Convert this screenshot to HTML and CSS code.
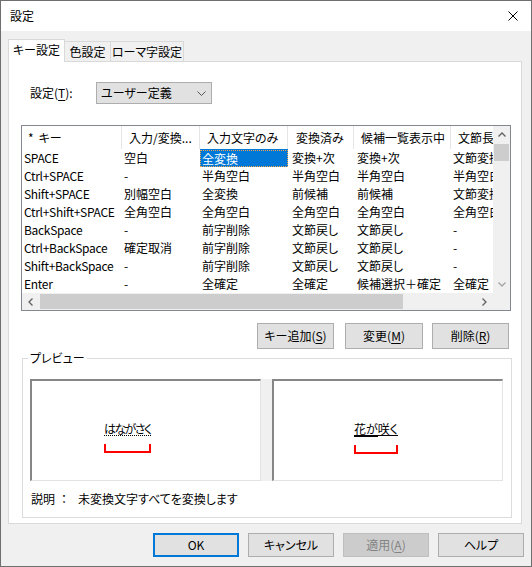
FILE: index.html
```html
<!DOCTYPE html>
<html lang="ja">
<head>
<meta charset="utf-8">
<title>設定</title>
<link rel="stylesheet" href="styles.css">
</head>
<body>
<div class="window">
  <div class="titlebar">
    <span class="title">設定</span>
    <svg class="close" width="10" height="10" viewBox="0 0 10 10"><path d="M0.5 0.5L9.5 9.5M9.5 0.5L0.5 9.5" stroke="#000" stroke-width="1" fill="none"/></svg>
  </div>
  <div class="tabs">
    <div class="tab active">キー設定</div>
    <div class="tab t2">色設定</div>
    <div class="tab t3">ローマ字設定</div>
  </div>
  <div class="panel">
    <div class="setting-row">
      <span class="setting-label">設定(<u>T</u>):</span>
      <div class="dropdown">
        <span>ユーザー定義</span>
        <svg width="9" height="5" viewBox="0 0 9 5"><path d="M0.5 0.5L4.5 4.5L8.5 0.5" stroke="#555" stroke-width="1" fill="none"/></svg>
      </div>
    </div>
    <div class="list">
      <div class="grid-area">
        <div class="row head">
          <div class="cell c1"><span class="star">*</span>キー</div>
          <div class="cell c2">入力/変換...</div>
          <div class="cell c3">入力文字のみ</div>
          <div class="cell c4">変換済み</div>
          <div class="cell c5">候補一覧表示中</div>
          <div class="cell c6">文節長変更中</div>
        </div>
        <div class="row">
          <div class="cell c1">SPACE</div><div class="cell c2">空白</div><div class="cell c3 selected"><span class="focus">全変換</span></div><div class="cell c4">変換+次</div><div class="cell c5">変換+次</div><div class="cell c6">文節変換</div>
        </div>
        <div class="row">
          <div class="cell c1">Ctrl+SPACE</div><div class="cell c2">-</div><div class="cell c3">半角空白</div><div class="cell c4">半角空白</div><div class="cell c5">半角空白</div><div class="cell c6">半角空白</div>
        </div>
        <div class="row">
          <div class="cell c1">Shift+SPACE</div><div class="cell c2">別幅空白</div><div class="cell c3">全変換</div><div class="cell c4">前候補</div><div class="cell c5">前候補</div><div class="cell c6">文節変換</div>
        </div>
        <div class="row">
          <div class="cell c1">Ctrl+Shift+SPACE</div><div class="cell c2">全角空白</div><div class="cell c3">全角空白</div><div class="cell c4">全角空白</div><div class="cell c5">全角空白</div><div class="cell c6">全角空白</div>
        </div>
        <div class="row">
          <div class="cell c1">BackSpace</div><div class="cell c2">-</div><div class="cell c3">前字削除</div><div class="cell c4">文節戻し</div><div class="cell c5">文節戻し</div><div class="cell c6">-</div>
        </div>
        <div class="row">
          <div class="cell c1">Ctrl+BackSpace</div><div class="cell c2">確定取消</div><div class="cell c3">前字削除</div><div class="cell c4">文節戻し</div><div class="cell c5">文節戻し</div><div class="cell c6">-</div>
        </div>
        <div class="row">
          <div class="cell c1">Shift+BackSpace</div><div class="cell c2">-</div><div class="cell c3">前字削除</div><div class="cell c4">文節戻し</div><div class="cell c5">文節戻し</div><div class="cell c6">-</div>
        </div>
        <div class="row">
          <div class="cell c1">Enter</div><div class="cell c2">-</div><div class="cell c3">全確定</div><div class="cell c4">全確定</div><div class="cell c5">候補選択＋確定</div><div class="cell c6">全確定</div>
        </div>
      </div>
      <div class="vscroll">
        <div class="arrow"><svg width="8" height="5" viewBox="0 0 8 5"><path d="M0.5 4.5L4 1L7.5 4.5" stroke="#606060" stroke-width="1.3" fill="none"/></svg></div>
        <div class="vthumb"></div>
        <div class="vtrack"></div>
        <div class="arrow"><svg width="8" height="5" viewBox="0 0 8 5"><path d="M0.5 0.5L4 4L7.5 0.5" stroke="#a3a3a3" stroke-width="1.3" fill="none"/></svg></div>
      </div>
      <div class="hscroll">
        <div class="arrow"><svg width="5" height="8" viewBox="0 0 5 8"><path d="M4.5 0.5L1 4L4.5 7.5" stroke="#606060" stroke-width="1.3" fill="none"/></svg></div>
        <div class="hthumb"></div>
        <div class="htrack"></div>
        <div class="arrow"><svg width="5" height="8" viewBox="0 0 5 8"><path d="M0.5 0.5L4 4L0.5 7.5" stroke="#606060" stroke-width="1.3" fill="none"/></svg></div>
      </div>
      <div class="corner"></div>
    </div>
    <div class="actions">
      <button class="btn a1">キー追加(<u>S</u>)</button>
      <button class="btn a2">変更(<u>M</u>)</button>
      <button class="btn a3">削除(<u>R</u>)</button>
    </div>
    <fieldset class="preview">
      <legend>プレビュー</legend>
      <div class="samples">
        <div class="sample-box left">
          <div class="sample">
            <span class="txt"><span class="dotted">はながさく</span></span>
            <div class="bracket"></div>
          </div>
        </div>
        <div class="sample-box right">
          <div class="sample">
            <span class="txt"><span class="thick">花が</span><span class="thin">咲く</span></span>
            <div class="bracket"></div>
          </div>
        </div>
      </div>
      <div class="desc">説明<span class="colon">：</span>未変換文字すべてを変換します</div>
    </fieldset>
  </div>
  <div class="footer">
    <button class="btn fbtn ok">OK</button>
    <button class="btn fbtn">キャンセル</button>
    <button class="btn fbtn disabled">適用(<u>A</u>)</button>
    <button class="btn fbtn">ヘルプ</button>
  </div>
</div>
</body>
</html>
```
FILE: styles.css
```css
* { box-sizing: border-box; }
html, body { margin: 0; padding: 0; }
body {
  font-family: "Noto Sans CJK JP", "Noto Sans", sans-serif;
  font-size: 12px;
  line-height: 16px;
  color: #000;
  font-feature-settings: "palt";
  background: #fff;
}
u { text-decoration: underline; text-underline-offset: 2px; }

.window {
  width: 532px;
  height: 567px;
  border: 1px solid #6f6f6f;
  background: #f0f0f0;
  display: flex;
  flex-direction: column;
}
.titlebar {
  height: 30px;
  flex: none;
  background: #fff;
  display: flex;
  align-items: center;
  justify-content: space-between;
  padding: 0 13px 0 9px;
}
.title { font-size: 12px; }

.tabs {
  display: flex;
  align-items: flex-end;
  height: 22px;
  margin: 8px 0 0 7px;
  flex: none;
}
.tab {
  height: 20px;
  border: 1px solid #d9d9d9;
  border-bottom: none;
  display: flex;
  align-items: center;
  justify-content: center;
  background: #f0f0f0;
}
.tab.active {
  width: 57px;
  height: 23px;
  margin-bottom: -1px;
  background: #fff;
  position: relative;
  z-index: 1;
  padding-bottom: 2px;
}
.tab.t2 { width: 46px; border-left: none; }
.tab.t3 { width: 73px; border-left: none; }

.panel {
  height: 463px;
  margin: 0 9px 0 7px;
  border: 1px solid #d9d9d9;
  background: #fff;
  flex: none;
}
.setting-row {
  display: flex;
  align-items: center;
  margin: 20px 0 0 21px;
  height: 22px;
}
.setting-label { width: 66px; }
.dropdown {
  width: 116px;
  height: 22px;
  background: #e1e1e1;
  border: 1px solid #adadad;
  display: flex;
  align-items: center;
  justify-content: space-between;
  padding: 0 5px 0 4px;
}

.list {
  width: 490px;
  height: 186px;
  margin: 21px 0 0 12px;
  border: 1px solid #828790;
  display: grid;
  grid-template-columns: 471px 17px;
  grid-template-rows: 167px 17px;
  background: #fff;
}
.grid-area { overflow: hidden; }
.row {
  display: flex;
  height: 18px;
  white-space: nowrap;
}
.row.head { height: 23px; }
.cell {
  flex: none;
  overflow: hidden;
  white-space: nowrap;
  padding-left: 2px;
  line-height: 18px;
}
.head .cell {
  line-height: 23px;
  border-right: 1px solid #e5e5e5;
  padding-left: 7px;
}
.head .c1 { padding-left: 6px; letter-spacing: 0; }
.star { margin-right: 5px; }
.head .c4 { padding-left: 8px; }
.c1 { width: 100px; letter-spacing: -0.3px; }
.c2 { width: 78px; }
.c3 { width: 88px; }
.c4 { width: 66px; padding-left: 4px; }
.c5 { width: 97px; padding-left: 3px; }
.c6 { width: 90px; }
.cell.selected {
  background: #0078d7;
  color: #fff;
  padding: 1px 0 0 0;
}
.focus {
  display: block;
  height: 17px;
  line-height: 15px;
  border: 1px dotted #f2a64b;
  padding-left: 1px;
}

.vscroll {
  background: #f0f0f0;
  display: flex;
  flex-direction: column;
}
.vscroll .arrow { height: 17px; display: flex; align-items: center; justify-content: center; flex: none; }
.vthumb { height: 17px; margin: 1px 1px 0; background: #cdcdcd; flex: none; }
.vtrack { flex: 1; }
.hscroll {
  background: #f0f0f0;
  display: flex;
}
.hscroll .arrow { width: 17px; display: flex; align-items: center; justify-content: center; flex: none; }
.hthumb { width: 363px; margin: 1px 0 1px 1px; background: #cdcdcd; flex: none; }
.htrack { flex: 1; }
.corner { background: #f0f0f0; }

.btn {
  font-family: inherit;
  font-size: 12px;
  line-height: 16px;
  color: #000;
  background: #e1e1e1;
  border: 1px solid #adadad;
  padding: 0;
  margin: 0;
  font-feature-settings: "palt";
}
.actions {
  display: flex;
  margin: 12px 0 0 248px;
  height: 26px;
}
.actions .btn { height: 26px; }
.a1 { width: 77px; }
.a2 { width: 78px; margin-left: 11px; }
.a3 { width: 77px; margin-left: 9px; }

.preview {
  width: 490px;
  margin: 1px 0 0 13px;
  padding: 0 5px 10px;
  border: 1px solid #dcdcdc;
  min-width: 0;
}
.preview legend {
  padding: 0 2px;
  line-height: 16px;
}
.samples {
  display: flex;
  gap: 11px;
  width: 473px;
  margin: 13px 0 0 2px;
  background: #f0f0f0;
}
.sample-box {
  width: 231px;
  height: 102px;
  background: #fff;
  border-top: 2px solid #868686;
  border-left: 2px solid #868686;
  border-right: 1px solid #e3e3e3;
  border-bottom: 1px solid #e3e3e3;
  padding-top: 40px;
}
.sample-box.left { padding-left: 72px; }
.sample-box.right { padding-left: 80px; }
.sample {
  display: inline-flex;
  flex-direction: column;
}
.txt { display: flex; line-height: 13px; }
.dotted { border-bottom: 1px dotted #000; letter-spacing: -1.6px; padding-right: 1px; }
.thick { border-bottom: 2px solid #000; }
.thin { border-bottom: 1px solid #000; height: 14px; }
.bracket {
  height: 9px;
  margin-top: 8px;
  border: 2px solid #f00;
  border-top: none;
}
.desc {
  margin: 10px 0 0 3px;
  line-height: 16px;
}
.colon {
  font-feature-settings: normal;
  margin: 0 8px 0 3px;
}

.footer {
  display: flex;
  justify-content: flex-end;
  gap: 9px;
  margin: 9px 7px 0 0;
}
.fbtn { width: 86px; height: 24px; }
.fbtn.ok { border: 2px solid #0078d7; }
.fbtn.disabled { background: #cccccc; border-color: #bfbfbf; color: #838383; }
```
